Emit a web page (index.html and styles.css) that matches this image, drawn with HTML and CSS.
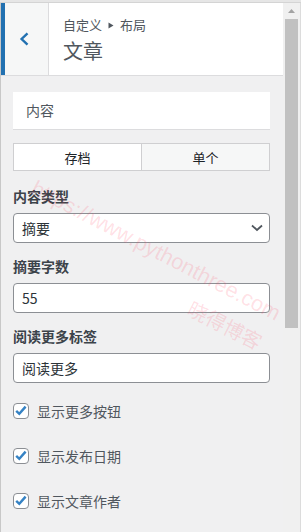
FILE: index.html
```html
<!DOCTYPE html>
<html lang="zh-CN">
<head>
<meta charset="utf-8">
<title>文章</title>
<link rel="stylesheet" href="styles.css">
</head>
<body>
<div class="app">
  <div class="topbar"></div>
  <div class="row">
    <div class="panel">
      <div class="header">
        <div class="back">
          <svg width="10" height="16" viewBox="0 0 10 16"><path d="M8.5 2.3 L2.6 8 L8.5 13.7" fill="none" stroke="#2271b1" stroke-width="2.4"/></svg>
        </div>
        <div class="title">
          <div class="crumb">自定义<svg class="tri" width="6" height="7" viewBox="0 0 6 7"><path d="M0.5 0.5 L5.5 3.5 L0.5 6.5 Z" fill="#50575e"/></svg>布局</div>
          <h3 class="heading">文章</h3>
        </div>
      </div>
      <div class="content">
        <div class="section-title">内容</div>
        <div class="tabs">
          <div class="tab tab-active">存档</div>
          <div class="tab">单个</div>
        </div>
        <div class="field field-first">
          <label class="label">内容类型</label>
          <div class="control select">
            <span>摘要</span>
            <svg width="12" height="8" viewBox="0 0 12 8"><path d="M1 1.5 L6 6 L11 1.5" fill="none" stroke="#50575e" stroke-width="1.8"/></svg>
          </div>
        </div>
        <div class="field">
          <label class="label">摘要字数</label>
          <input class="control" type="text" value="55">
        </div>
        <div class="field">
          <label class="label">阅读更多标签</label>
          <input class="control" type="text" value="阅读更多">
        </div>
        <div class="checks">
          <div class="check"><span class="box"><svg width="14" height="14" viewBox="0 0 14 14"><path d="M2.2 6.8 L5.3 9.8 L11.6 2.6" fill="none" stroke="#3582c4" stroke-width="2.4"/></svg></span>显示更多按钮</div>
          <div class="check"><span class="box"><svg width="14" height="14" viewBox="0 0 14 14"><path d="M2.2 6.8 L5.3 9.8 L11.6 2.6" fill="none" stroke="#3582c4" stroke-width="2.4"/></svg></span>显示发布日期</div>
          <div class="check"><span class="box"><svg width="14" height="14" viewBox="0 0 14 14"><path d="M2.2 6.8 L5.3 9.8 L11.6 2.6" fill="none" stroke="#3582c4" stroke-width="2.4"/></svg></span>显示文章作者</div>
        </div>
      </div>
    </div>
    <div class="scroll">
      <svg class="arrow" width="7" height="4" viewBox="0 0 7 4"><path d="M0 4 L3.5 0 L7 4 Z" fill="#a3a3a3"/></svg>
      <div class="thumb"></div>
    </div>
  </div>
  <span class="wm wm-url">https://www.pythonthree.com</span>
  <span class="wm wm-cn">晓得博客</span>
</div>
</body>
</html>
```
FILE: styles.css
```css
* { box-sizing: border-box; }
body {
  margin: 0;
  background: #f0f0f1;
  font-family: "Noto Sans CJK SC", "Noto Sans", sans-serif;
}
.app {
  position: relative;
  width: 301px;
  height: 532px;
  overflow: hidden;
  display: flex;
  flex-direction: column;
}
.topbar {
  flex: none;
  height: 3px;
  background: #e6e6e6;
  border-bottom: 1px solid #d4d4d4;
}
.row {
  flex: 1;
  display: flex;
  min-height: 0;
}
.panel {
  width: 283px;
  border-left: 1px solid #c8c8c8;
  background: #f0f0f1;
}
.header {
  display: flex;
  height: 73px;
  background: #fff;
  border-bottom: 1px solid #dcdcde;
}
.back {
  width: 48px;
  flex: none;
  background: #f6f7f7;
  border-left: 4px solid #2271b1;
  border-right: 1px solid #dcdcde;
  display: flex;
  align-items: center;
  padding-left: 14px;
}
.back svg { display: block; }
.title {
  padding: 13px 10px 0 14px;
}
.crumb {
  font-size: 13px;
  line-height: 18px;
  color: #50575e;
  display: flex;
  align-items: center;
}
.tri {
  margin: 0 6px;
  display: block;
}
.heading {
  margin: 4px 0 0;
  font-size: 20px;
  line-height: 26px;
  font-weight: 400;
  color: #50575e;
}
.content {
  padding: 16px 13px 0 12px;
}
.section-title {
  height: 38px;
  background: #fff;
  border-bottom: 1px solid #dcdcde;
  padding-left: 13px;
  font-size: 14px;
  line-height: 37px;
  color: #50575e;
}
.tabs {
  margin-top: 13px;
  height: 28px;
  display: flex;
  border: 1px solid #cfcfd1;
}
.tab {
  flex: 1;
  display: flex;
  align-items: center;
  justify-content: center;
  font-size: 13px;
  color: #1d2327;
  background: #f6f7f7;
}
.tab-active {
  background: #fff;
  border-right: 1px solid #cfcfd1;
}
.field { margin-top: 13px; }
.field-first { margin-top: 15px; }
.label {
  display: block;
  font-size: 14px;
  font-weight: 700;
  line-height: 20px;
  color: #3c434a;
  margin-bottom: 7px;
}
.control {
  display: flex;
  align-items: center;
  width: 100%;
  height: 30px;
  margin: 0;
  border: 1px solid #8c8f94;
  border-radius: 4px;
  background: #fff;
  padding: 0 8px;
  font-family: "Noto Sans CJK SC", "Noto Sans", sans-serif;
  font-size: 14px;
  color: #2c3338;
  outline: none;
}
.select {
  justify-content: space-between;
  padding-right: 6px;
}
.select svg { display: block; }
.checks {
  margin-top: 18px;
  display: flex;
  flex-direction: column;
  gap: 25px;
}
.check {
  display: flex;
  align-items: center;
  gap: 8px;
  height: 20px;
  font-size: 14px;
  color: #50575e;
}
.box {
  width: 16px;
  height: 16px;
  border: 1px solid #8c8f94;
  border-radius: 4px;
  background: #fff;
  display: flex;
  align-items: center;
  justify-content: center;
}
.box svg { display: block; }
.scroll {
  width: 18px;
  background: #f0f0f0;
  border-right: 1px solid #dcdcdc;
  padding: 6px 2px 0;
  display: flex;
  flex-direction: column;
  align-items: center;
}
.arrow { display: block; }
.thumb {
  margin-top: 6px;
  width: 13px;
  height: 309px;
  background: #c1c1c1;
}
.wm {
  position: absolute;
  transform-origin: 0 0;
  white-space: nowrap;
  line-height: 1;
  color: rgba(255, 70, 100, 0.17);
  pointer-events: none;
}
.wm-url {
  left: 38px;
  top: 177px;
  transform: rotate(27.5deg);
  font-family: "Liberation Sans", sans-serif;
  font-size: 21.6px;
}
.wm-cn {
  left: 194px;
  top: 298px;
  transform: rotate(27deg);
  font-size: 20px;
}
```
